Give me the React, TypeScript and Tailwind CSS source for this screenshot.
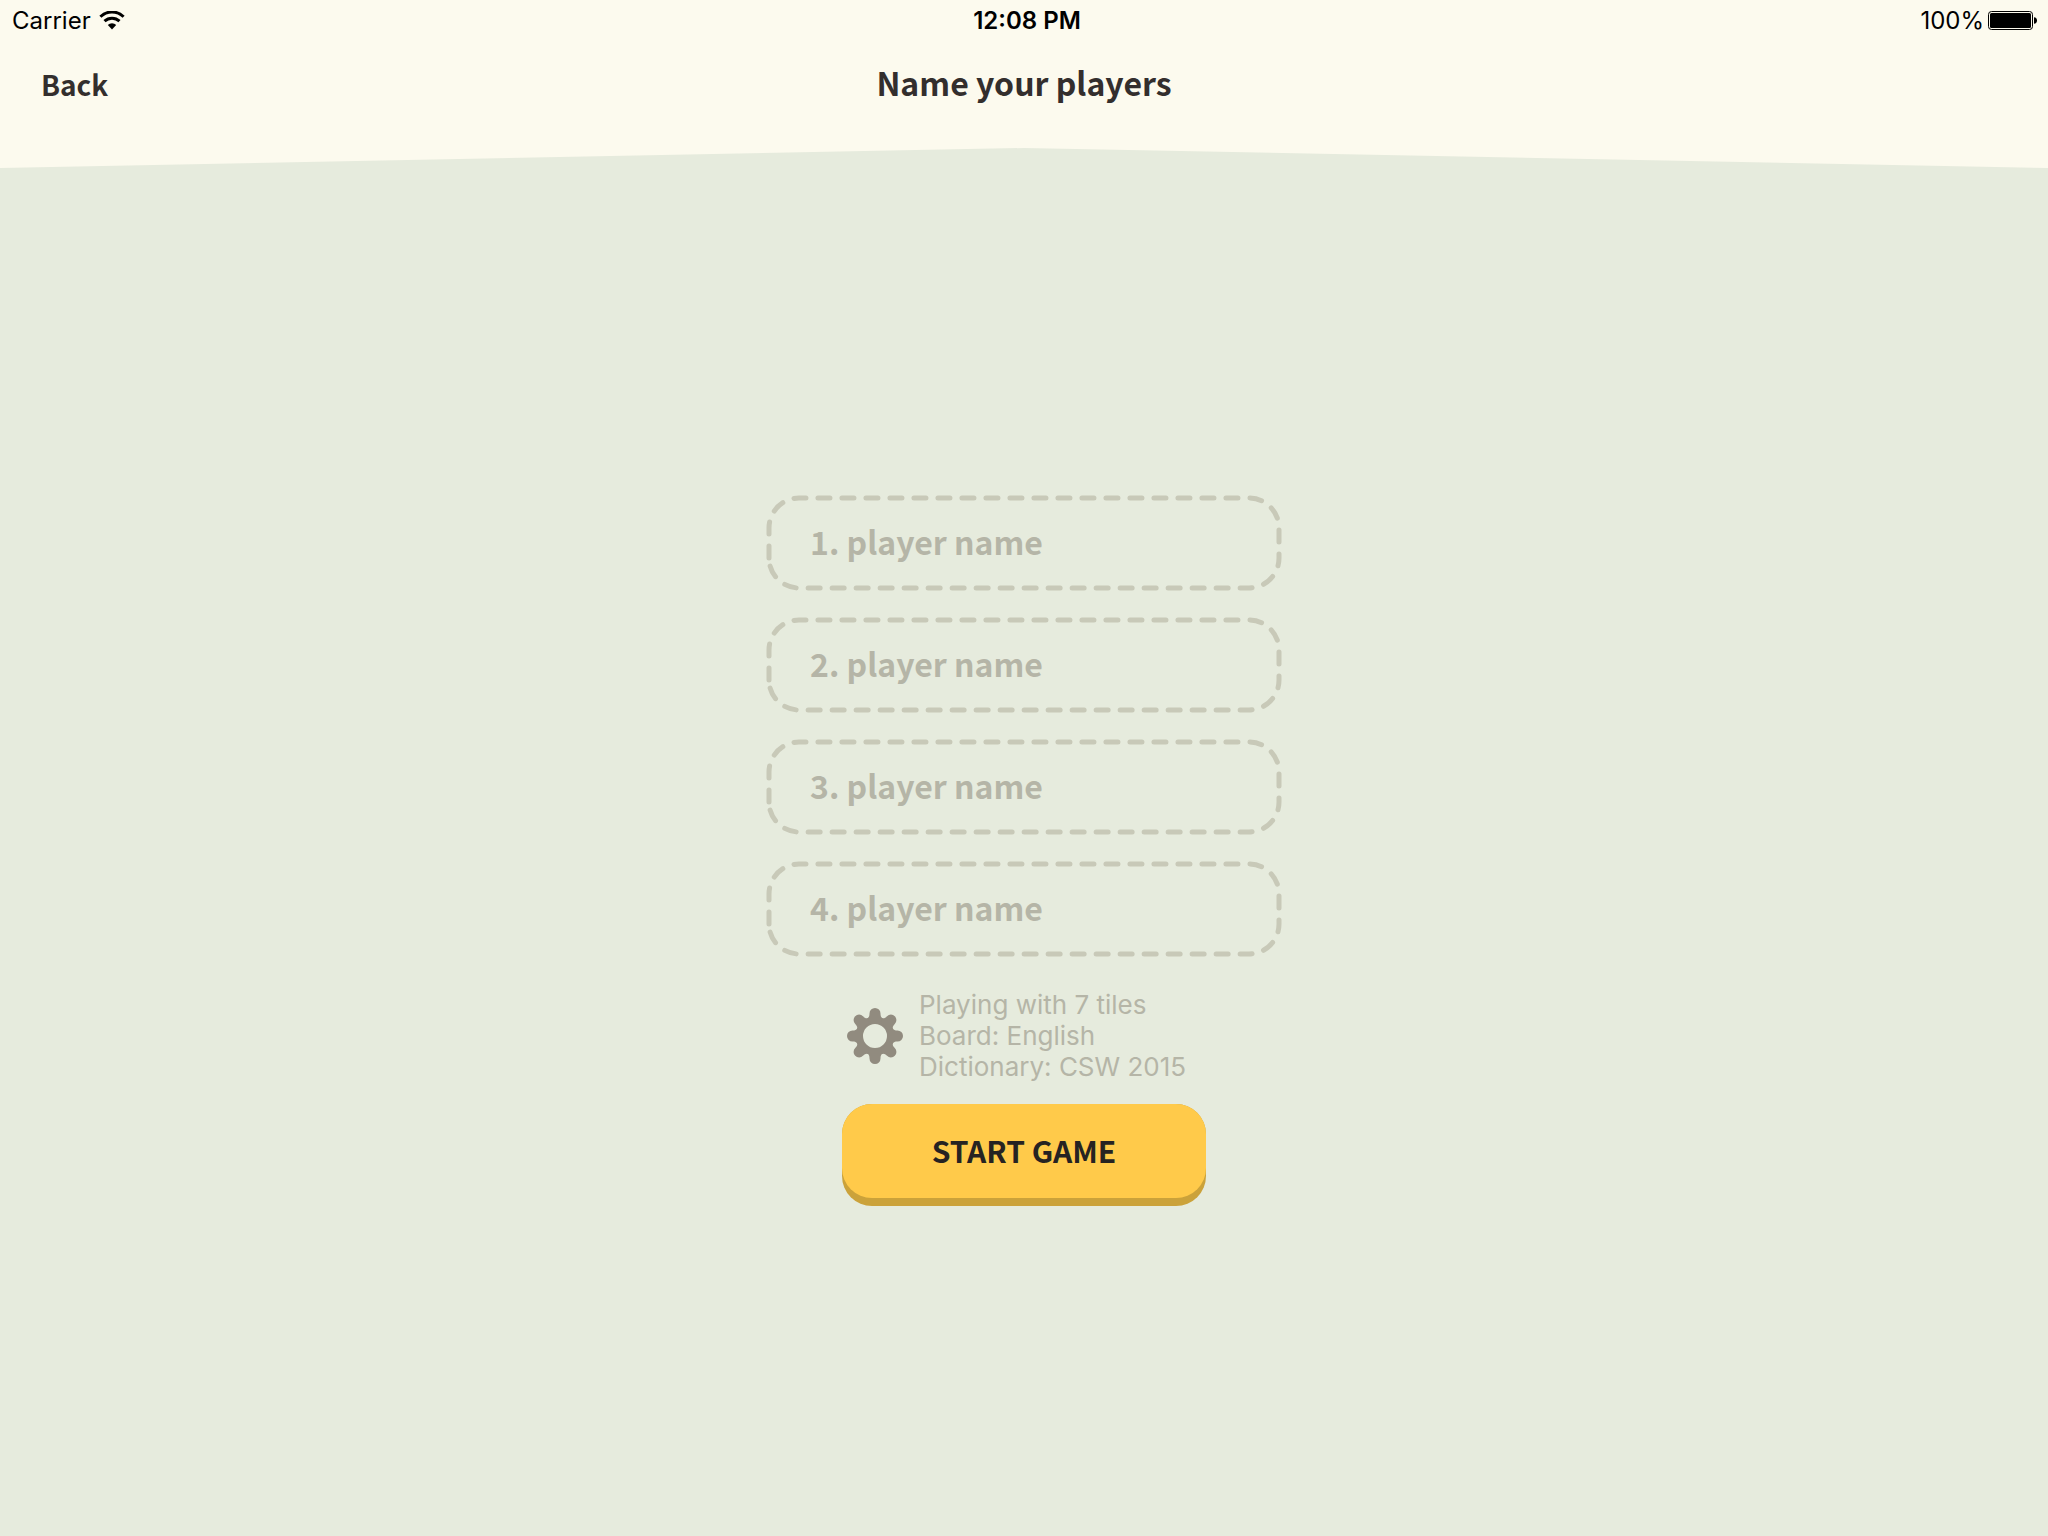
import React from "react";

const players = [1, 2, 3, 4];

function WifiIcon() {
  return (
    <svg width="26" height="20" viewBox="0 0 26 20" fill="none" aria-hidden="true">
      <path d="M1.4 5.7A16.6 16.6 0 0 1 24.6 5.7" stroke="#000" strokeWidth="3" />
      <path d="M5.5 10.2A11 11 0 0 1 20.5 10.2" stroke="#000" strokeWidth="3" />
      <path d="M13 18.6L8.8 14A6 6 0 0 1 17.2 14Z" fill="#000" />
    </svg>
  );
}

function BatteryIcon() {
  return (
    <svg width="50" height="20" viewBox="0 0 50 20" fill="none" aria-hidden="true">
      <rect x="0.5" y="0.5" width="44" height="18" rx="3" stroke="#000" />
      <rect x="2" y="2" width="41" height="15" rx="1.5" fill="#000" />
      <path d="M46 6.2C48 6.4 49 7.6 49 9.5S48 12.6 46 12.8Z" fill="#000" />
    </svg>
  );
}

function GearIcon() {
  return (
    <svg width="56" height="56" viewBox="-28 -28 56 56" fill="none" aria-hidden="true">
      <circle r="15.5" stroke="#918b7f" strokeWidth="7" />
      {[0, 45, 90, 135, 180, 225, 270, 315].map((angle) => (
        <path
          key={angle}
          transform={`rotate(${angle})`}
          fill="#918b7f"
          d="M-5.5 -22.5A5.5 5.5 0 0 1 5.5 -22.5C5.5 -20 6 -18.6 7.8 -17.6L5 -14H-5L-7.8 -17.6C-6 -18.6 -5.5 -20 -5.5 -22.5Z"
        />
      ))}
    </svg>
  );
}

function PlayerField({ index }: { index: number }) {
  return (
    <div className="relative h-24 w-full">
      <svg className="absolute inset-0" width="516" height="96" viewBox="0 0 516 96" fill="none" aria-hidden="true">
        <path
          d="M3 63V33A30 30 0 0 1 33 3H483A30 30 0 0 1 513 33V63A30 30 0 0 1 483 93H33A30 30 0 0 1 3 63"
          stroke="#c8c9b8"
          strokeWidth="5"
          strokeLinecap="round"
          strokeDasharray="12 12"
        />
      </svg>
      <input
        type="text"
        aria-label={`Player ${index} name`}
        placeholder={`${index}. player name`}
        className="relative h-full w-full bg-transparent px-11 pb-1 text-[32px] font-bold text-[#332e2d] outline-none placeholder:text-[#b5b5a7]"
      />
    </div>
  );
}

export default function App() {
  return (
    <div className="flex min-h-screen flex-col bg-[#e6ebdd] font-['Noto_Sans_CJK_SC',sans-serif]">
      <header className="h-[168px] bg-[#fcfaee] [clip-path:polygon(0_0,100%_0,100%_100%,50%_calc(100%_-_20px),0_100%)]">
        <div className="grid h-[42px] grid-cols-3 items-center pl-3 pr-2.5 font-['Inter',sans-serif] text-[24px] text-black">
          <div className="flex items-center gap-2">
            <span>Carrier</span>
            <WifiIcon />
          </div>
          <div className="pl-1 text-center font-semibold">12:08 PM</div>
          <div className="flex items-center justify-end gap-1">
            <span>100%</span>
            <BatteryIcon />
          </div>
        </div>
        <nav className="grid h-[86px] grid-cols-[1fr_auto_1fr] items-center px-[41px] font-bold text-[#332e2d]">
          <button type="button" className="justify-self-start pb-0.5 text-[28px]">
            Back
          </button>
          <h1 className="pb-1.5 text-[32px] font-bold">Name your players</h1>
        </nav>
      </header>

      <main className="flex flex-1 flex-col items-center justify-center pb-[3px]">
        <form className="flex w-[516px] flex-col items-center" onSubmit={(e) => e.preventDefault()}>
          <div className="flex w-full flex-col gap-[26px]">
            {players.map((n) => (
              <PlayerField key={n} index={n} />
            ))}
          </div>
          <div className="mt-8 flex w-[364px] items-center gap-4 pl-[5px]">
            <button type="button" aria-label="Game settings" className="shrink-0">
              <GearIcon />
            </button>
            <div className="whitespace-nowrap font-['Inter',sans-serif] text-[26px] leading-[31px] text-[#b5b5a7]">
              <p>Playing with 7 tiles</p>
              <p>Board: English</p>
              <p>Dictionary: CSW 2015</p>
            </div>
          </div>
          <button
            type="submit"
            className="mt-[22px] h-[102px] w-[364px] rounded-[30px] bg-[#cba23a] pb-2 text-[30px] font-bold text-[#262322]"
          >
            <span className="flex h-full items-center justify-center rounded-[30px] bg-[#ffca4a] pb-0.5">START GAME</span>
          </button>
        </form>
      </main>
    </div>
  );
}
